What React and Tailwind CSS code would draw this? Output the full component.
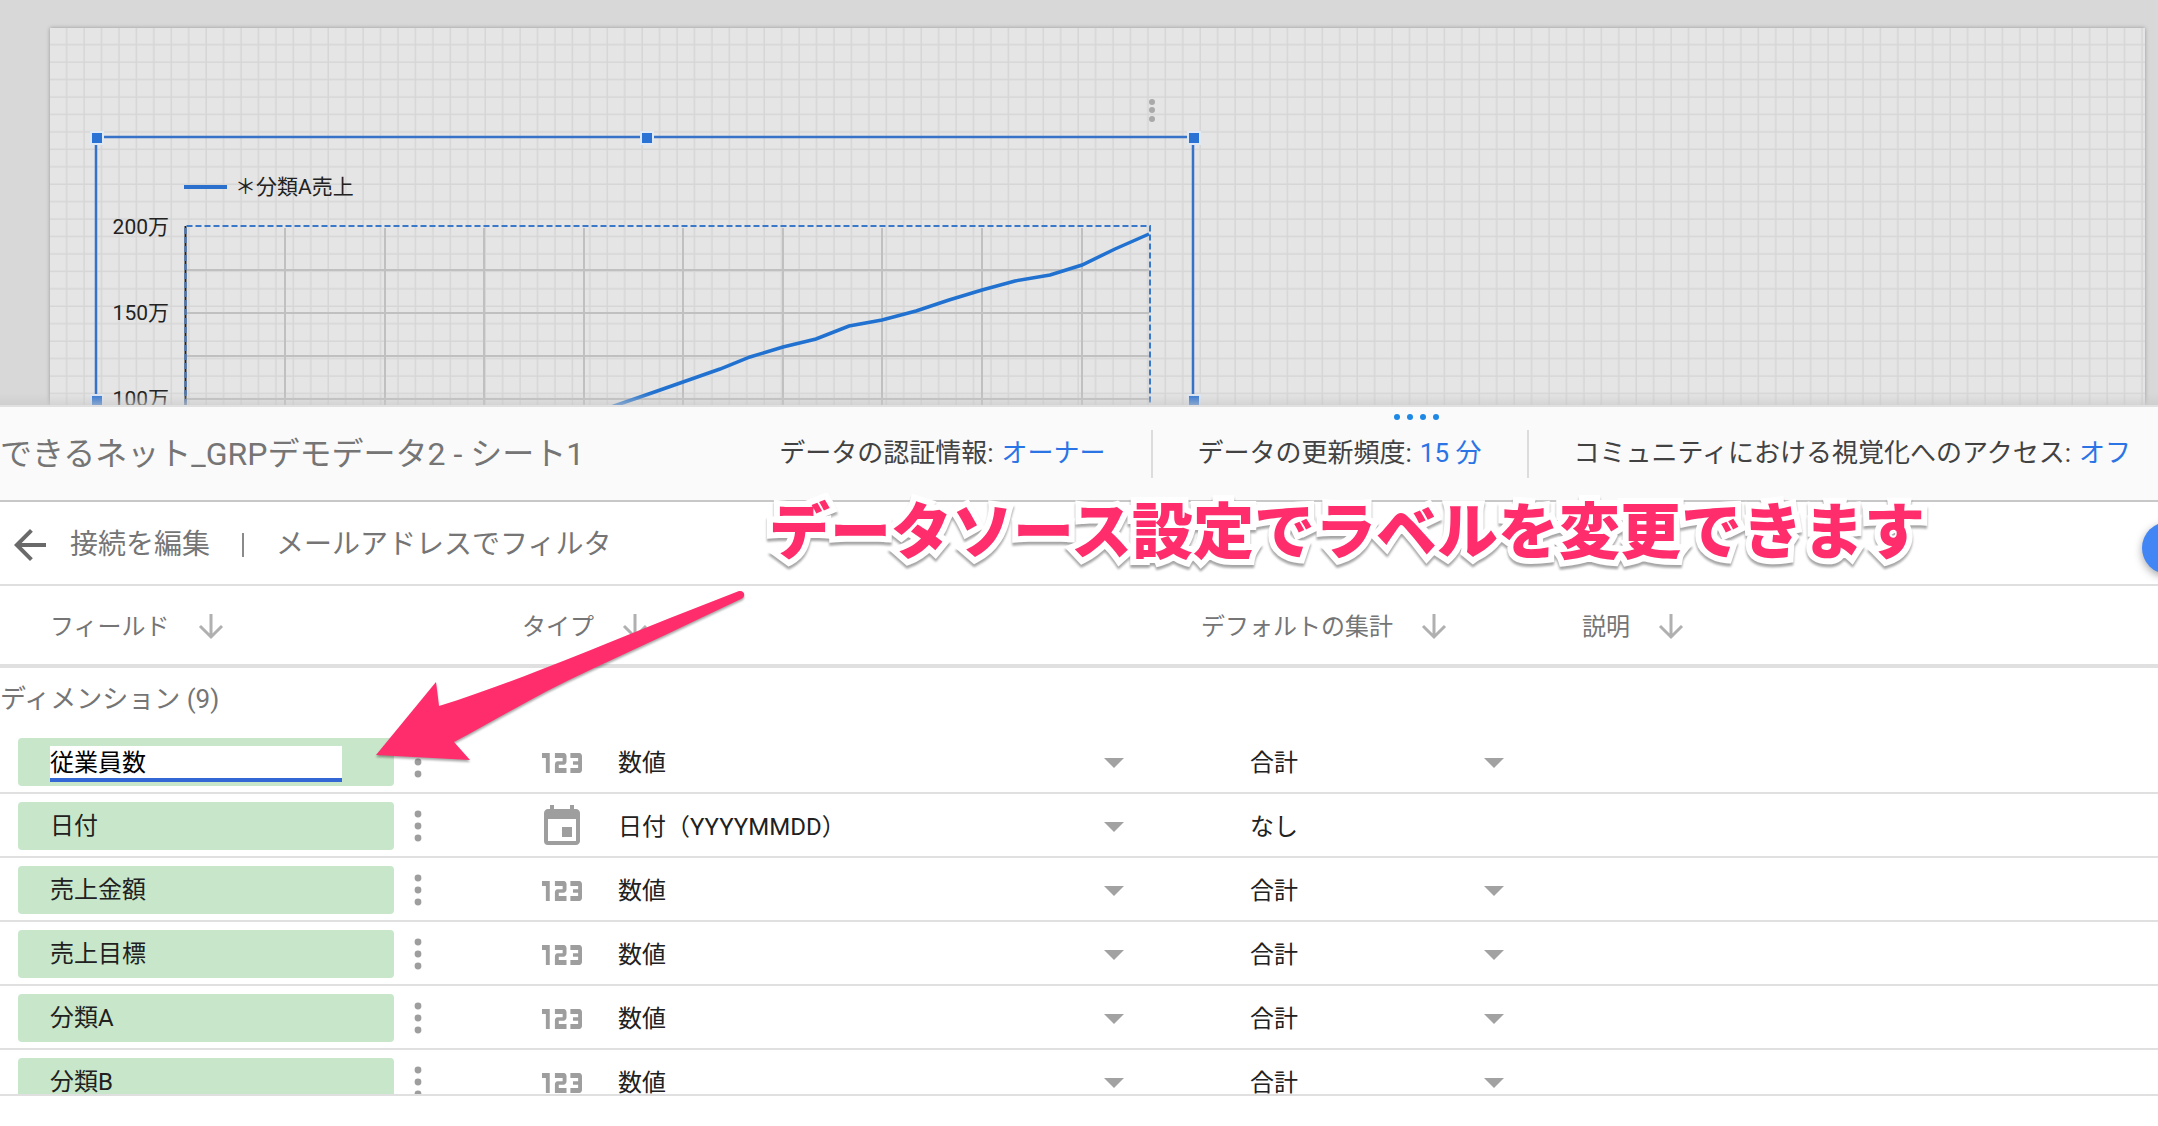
import React from "react";
import { Md123, MdArrowBack, MdEvent, MdHelp } from "react-icons/md";

const FIELDS = [
  { name: "従業員数", type: "数値", aggregation: "合計", editing: true },
  { name: "日付", type: "日付（YYYYMMDD）", aggregation: "なし", date: true },
  { name: "売上金額", type: "数値", aggregation: "合計" },
  { name: "売上目標", type: "数値", aggregation: "合計" },
  { name: "分類A", type: "数値", aggregation: "合計" },
  { name: "分類B", type: "数値", aggregation: "合計" },
];

const GRID_X = [285, 385, 484, 584, 683, 783, 882, 982, 1082];
const GRID_Y = [270, 313, 356, 399];

const HANDLES = [
  [97, 138],
  [647, 138],
  [1194, 138],
  [97, 401],
  [1194, 401],
];

const SERIES =
  "583,417 611,407 643,396 683,382 720,369 750,357 783,347 816,339 849,326 882,320 916,311 949,300 982,290 1015,281 1050,275 1082,265 1115,249 1149,234";

const ReportCanvas = () => {
  return (
    <div className="relative h-[405px] overflow-hidden bg-[#d8d8d8] pt-[28px] pl-[50px] pr-[13px]">
      <div className="h-full bg-[#e5e5e5] shadow-[0_0_4px_rgba(0,0,0,0.3)]">
        <svg className="h-full w-full" aria-hidden="true">
          <defs>
            <pattern id="dots" width="17.44" height="17.44" patternUnits="userSpaceOnUse">
              <path d="M17.44 0V17.44M0 17.44H17.44" stroke="#d6d6d6" strokeWidth="3" fill="none" />
            </pattern>
          </defs>
          <rect width="100%" height="100%" fill="url(#dots)" />
        </svg>
      </div>
      <svg
        className="absolute top-0 left-0"
        width="1240"
        height="405"
        viewBox="0 0 1240 405"
        role="img"
        aria-label="＊分類A売上"
      >
        <g fill="#a9a9a9">
          <circle cx="1152" cy="102" r="3" />
          <circle cx="1152" cy="110" r="3" />
          <circle cx="1152" cy="119" r="3" />
        </g>

        <g stroke="#c0c0c0" strokeWidth="2">
          {GRID_X.map((x) => (
            <line key={x} x1={x} x2={x} y1="228" y2="405" />
          ))}
          {GRID_Y.map((y) => (
            <line key={y} x1="187" x2="1149" y1={y} y2={y} />
          ))}
        </g>
        <path d="M185.5 226V405" stroke="#222" strokeWidth="2" />
        <path
          d="M185.5 405V226H1150V405"
          fill="none"
          stroke="#3a78c9"
          strokeWidth="2"
          strokeDasharray="6 3"
        />
        <polyline points={SERIES} fill="none" stroke="#2172d0" strokeWidth="3.5" />

        <path d="M184 187H227" stroke="#2a70cc" strokeWidth="4" />
        <g fill="#222" fontSize="21">
          <text x="235" y="194">＊分類A売上</text>
          <text x="169" y="234" textAnchor="end">200万</text>
          <text x="169" y="320" textAnchor="end">150万</text>
          <text x="169" y="406" textAnchor="end">100万</text>
        </g>

        <path d="M96 405V137H1193V405" fill="none" stroke="#3672c8" strokeWidth="2.5" />
        {HANDLES.map(([x, y]) => (
          <rect
            key={`${x}-${y}`}
            x={x - 6}
            y={y - 6}
            width="12"
            height="12"
            fill="#2a72d4"
            stroke="#dfe8f5"
            strokeWidth="2"
          />
        ))}
      </svg>
      <div className="absolute inset-x-0 bottom-0 h-3 bg-linear-to-b from-transparent to-[#c8c8c8]/60" />
    </div>
  );
};

const HeaderItem = ({ label, value }) => (
  <div className="flex h-12 items-center px-[45px]">
    <span className="text-[#424242]">{label}:</span>
    <a href="#" className="ml-2 text-[#2a74e6]">
      {value}
    </a>
  </div>
);

const SourceHeader = () => {
  return (
    <header className="relative flex h-[97px] items-center justify-between border-t-2 border-b-2 border-t-[#e0e0e0] border-b-[#c8c8c8] bg-[#fafafa]">
      <h1 className="text-[32px] whitespace-nowrap text-[#757575]">
        できるネット_GRPデモデータ2 - シート1
      </h1>
      <div className="flex divide-x-2 divide-[#dcdcdc] pr-0.5 text-[26px] whitespace-nowrap">
        <HeaderItem label="データの認証情報" value="オーナー" />
        <HeaderItem label="データの更新頻度" value="15 分" />
        <div className="-mr-5">
          <HeaderItem label="コミュニティにおける視覚化へのアクセス" value="オフ" />
        </div>
      </div>
      <div className="absolute top-[7px] left-[1394px] flex gap-[7px]">
        {[0, 1, 2, 3].map((i) => (
          <span key={i} className="size-1.5 rounded-full bg-[#1e88e5]" />
        ))}
      </div>
    </header>
  );
};

const Toolbar = () => {
  return (
    <div className="relative flex h-[84px] items-center overflow-hidden border-b-2 border-[#dfdfdf] pt-1 pl-1.5 text-[28px] text-[#757575]">
      <button type="button" aria-label="戻る">
        <MdArrowBack className="size-12 text-[#6a6a6a]" />
      </button>
      <button type="button" className="ml-4">
        接続を編集
      </button>
      <span className="mx-8 h-6 w-0.5 bg-[#8a8a8a]" />
      <button type="button">メールアドレスでフィルタ</button>
      <button
        type="button"
        aria-label="ヘルプ"
        className="absolute top-5 -right-9 flex size-[52px] items-center justify-center rounded-full bg-[#4285f4] text-white shadow-[0_3px_8px_rgba(0,0,0,0.35)]"
      >
        <MdHelp className="size-6" />
      </button>
    </div>
  );
};

const HeadCell = ({ children, className }) => (
  <th className={`h-[82px] border-b-4 border-[#e0e0e0] p-0 pt-1 text-left font-normal ${className}`}>
    <button type="button" className="flex items-center gap-7">
      {children}
      <svg
        width="26"
        height="26"
        viewBox="0 0 26 26"
        fill="none"
        stroke="#b0b0b0"
        strokeWidth="3"
        aria-hidden="true"
      >
        <path d="M13 0V22M2 12L13 23L24 12" />
      </svg>
    </button>
  </th>
);

const PickList = ({ label, value, className }) => (
  <div className={`relative ${className}`}>
    <select aria-label={label} defaultValue={value} className="w-full appearance-none bg-transparent">
      <option>{value}</option>
    </select>
    <svg
      className="pointer-events-none absolute top-1/2 right-0 h-2.5 w-5 -translate-y-1/2"
      viewBox="0 0 20 10"
      fill="#a2a2a2"
    >
      <path d="M0 0h20L10 10z" />
    </svg>
  </div>
);

const FieldRow = ({ field }) => {
  const cell = "border-b-2 border-[#e0e0e0] px-0 pt-2 pb-1.5";

  return (
    <tr>
      <td className={cell}>
        <div className="flex items-center pl-[18px]">
          <div
            className={`flex h-12 w-[376px] items-center rounded-sm bg-[#c8e6c9] pl-8 ${
              field.editing ? "pt-1" : ""
            }`}
          >
            {field.editing ? (
              <input
                aria-label="フィールド名"
                defaultValue={field.name}
                className="h-9 w-[292px] border-b-4 border-[#3367d6] bg-white pb-1 text-black outline-none"
              />
            ) : (
              field.name
            )}
          </div>
          <button
            type="button"
            aria-label={`${field.name} のメニュー`}
            className="flex h-12 w-12 items-center justify-center"
          >
            <svg width="8" height="32" viewBox="0 0 8 32" fill="#9e9e9e">
              <circle cx="4" cy="4" r="3.4" />
              <circle cx="4" cy="16" r="3.4" />
              <circle cx="4" cy="28" r="3.4" />
            </svg>
          </button>
        </div>
      </td>
      <td className={cell}>
        <div className="flex h-12 items-center pt-0.5 pl-4 text-[#9e9e9e]">
          <div className="mr-8 flex w-12 justify-center">
            {field.date ? (
              <MdEvent className="size-12" />
            ) : (
              <Md123 className="h-5 w-10" viewBox="4 9 15.5 6" preserveAspectRatio="none" />
            )}
          </div>
          <PickList label="タイプ" value={field.type} className="w-[506px] text-[#212121]" />
        </div>
      </td>
      <td className={cell}>
        <div className="flex h-12 items-center pt-0.5 pl-[49px]">
          {field.aggregation === "なし" ? (
            field.aggregation
          ) : (
            <PickList label="デフォルトの集計" value={field.aggregation} className="w-[254px]" />
          )}
        </div>
      </td>
      <td className={cell} />
    </tr>
  );
};

const FieldTable = () => {
  return (
    <div className="h-[510px] overflow-hidden border-b-2 border-[#e0e0e0]">
      <table className="w-full table-fixed border-separate border-spacing-0 text-2xl text-[#212121]">
        <colgroup>
          <col className="w-[522px]" />
          <col className="w-[679px]" />
          <col className="w-[381px]" />
          <col />
        </colgroup>
        <thead className="text-[#757575]">
          <tr>
            <HeadCell className="pl-[50px]">フィールド</HeadCell>
            <HeadCell>タイプ</HeadCell>
            <HeadCell>デフォルトの集計</HeadCell>
            <HeadCell>説明</HeadCell>
          </tr>
        </thead>
        <tbody>
          <tr>
            <th
              colSpan={4}
              className="h-[62px] p-0 text-left text-[26px] font-normal text-[#757575]"
            >
              ディメンション (9)
            </th>
          </tr>
          {FIELDS.map((field) => (
            <FieldRow key={field.name} field={field} />
          ))}
        </tbody>
      </table>
    </div>
  );
};

const Annotation = () => {
  return (
    <>
      <p className="pointer-events-none absolute top-[493px] left-[769px] text-[61px] leading-[80px] font-black whitespace-nowrap text-[#ff2d6c] drop-shadow-[0_3px_1px_rgba(0,0,0,0.35)] [-webkit-text-stroke:12px_white] [paint-order:stroke_fill]">
        データソース設定でラベルを変更できます
      </p>
      <svg
        className="pointer-events-none absolute top-[580px] left-[370px] drop-shadow-[0_2px_1px_rgba(0,0,0,0.35)]"
        width="390"
        height="200"
        viewBox="0 0 390 200"
        fill="#ff2d6c"
        aria-hidden="true"
      >
        <path d="M6 175L66 102L69 126C140 104 220 70 300 38L369 11C375 10 376 17 371 19C320 43 270 67 220 90C170 113 125 140 84 162L100 180Z" />
      </svg>
    </>
  );
};

export default function App() {
  return (
    <div className="relative min-h-screen overflow-hidden bg-white font-[Roboto,'Noto_Sans_CJK_JP',sans-serif]">
      <ReportCanvas />
      <section>
        <SourceHeader />
        <Toolbar />
        <FieldTable />
      </section>
      <Annotation />
    </div>
  );
}
